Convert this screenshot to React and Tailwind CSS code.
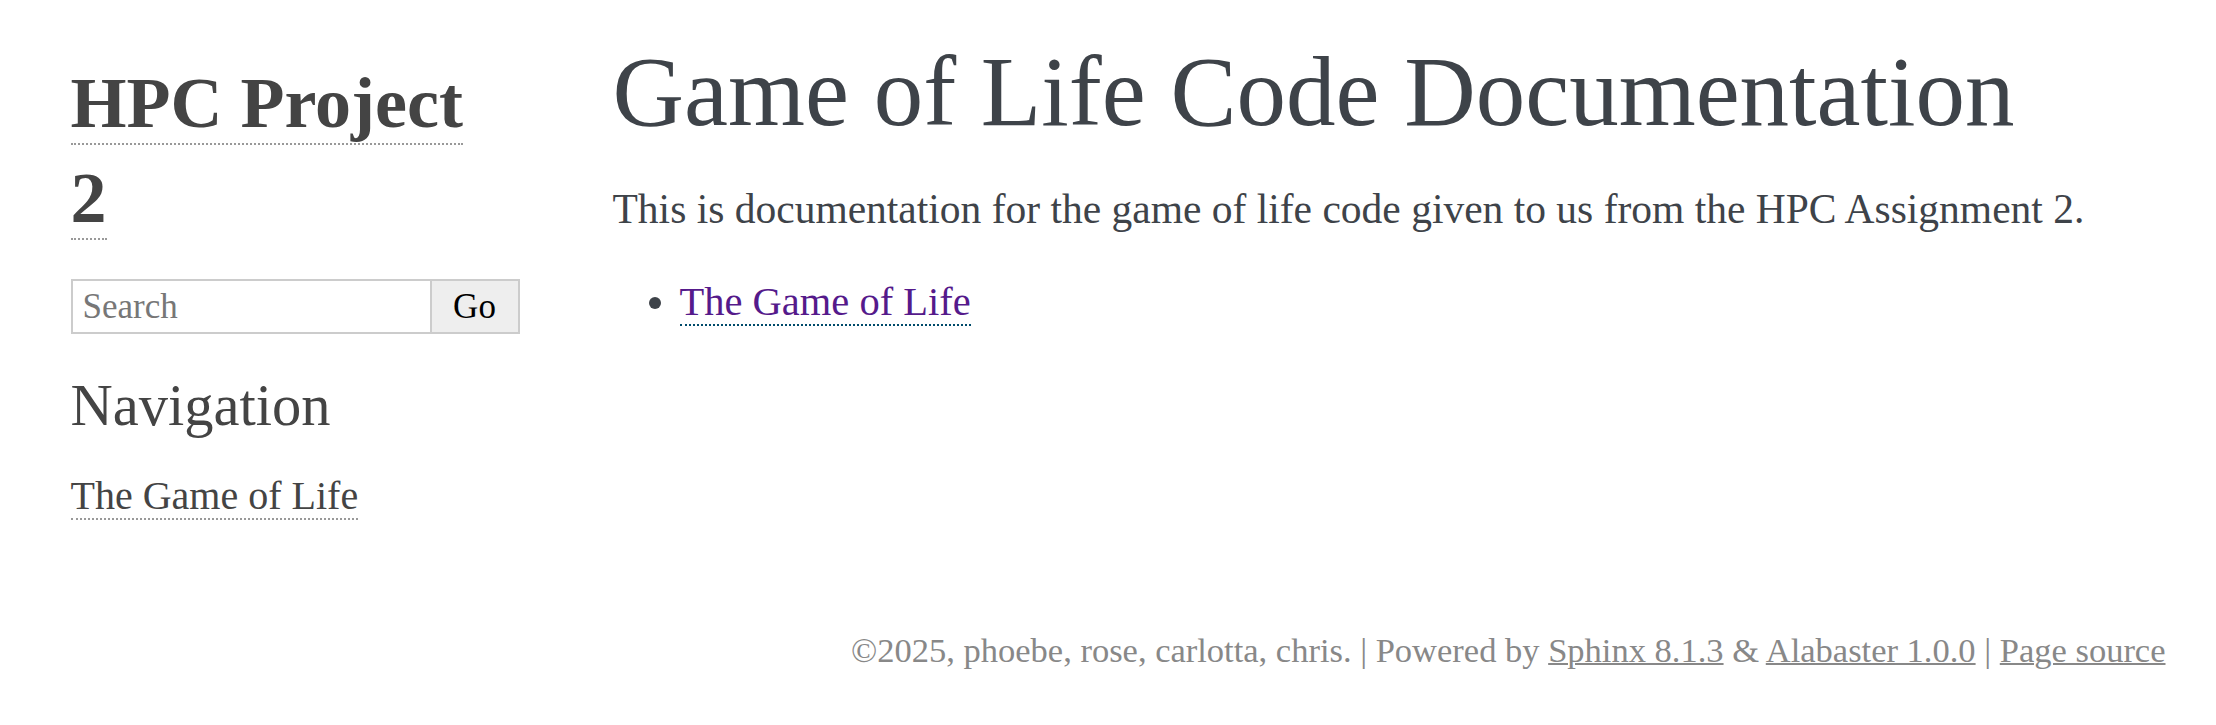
export default function App() {
  return (
    <div className="min-h-screen bg-white font-['Liberation_Serif',serif] text-[#3E4349]">
      <div className="mx-auto flex w-[2115px]">
        {/* sidebar */}
        <div className="w-[495px] shrink-0 pr-[22px] pl-[20px] pt-[56px] text-[#444]">
          <h1 className="text-[72px] font-bold leading-[95px]">
            <a href="#" className="border-b-2 border-dotted border-[#999]">
              HPC Project
              <br />2
            </a>
          </h1>
          <form className="mt-[33px] flex h-[55px] w-[449px]" onSubmit={e => e.preventDefault()}>
            <input
              type="text"
              placeholder="Search"
              className="h-full w-[359px] border-2 border-r-0 border-[#ccc] px-[10px] text-[35px] text-black placeholder:text-[#777] outline-none"
            />
            <button type="submit" className="h-full w-[90px] border-2 border-[#ccc] bg-[#eee] text-[35px] text-black">
              Go
            </button>
          </form>
          <h3 className="mt-[37px] text-[58.5px] leading-[70px] font-normal">Navigation</h3>
          <div className="mt-[27px] text-[40px] leading-[56px]">
            <a href="#" className="border-b-2 border-dotted border-[#999]">The Game of Life</a>
          </div>
        </div>

        {/* body */}
        <div className="flex-1 px-[67px] pt-[42px]">
          <h1 className="text-[99px] leading-[99px] font-normal">Game of Life Code Documentation</h1>
          <p className="mt-[39px] text-[41.5px] leading-[58px]">
            This is documentation for the game of life code given to us from the HPC Assignment 2.
          </p>
          <ul className="mt-[34px] ml-[67px] list-disc text-[41.5px] leading-[58px] marker:text-[#3E4349]">
            <li>
              <a href="#" className="border-b-2 border-dotted border-[#004B6B] text-[40.5px] text-[#551A8B]">The Game of Life</a>
            </li>
          </ul>
        </div>
      </div>

      <div className="mx-auto mt-[102px] w-[2115px] text-right text-[34.5px] leading-[48px] text-[#888]">
        ©2025, phoebe, rose, carlotta, chris. | Powered by{' '}
        <a href="#" className="underline decoration-2">Sphinx 8.1.3</a> &amp;{' '}
        <a href="#" className="underline decoration-2">Alabaster 1.0.0</a> |{' '}
        <a href="#" className="underline decoration-2">Page source</a>
      </div>
    </div>
  );
}
